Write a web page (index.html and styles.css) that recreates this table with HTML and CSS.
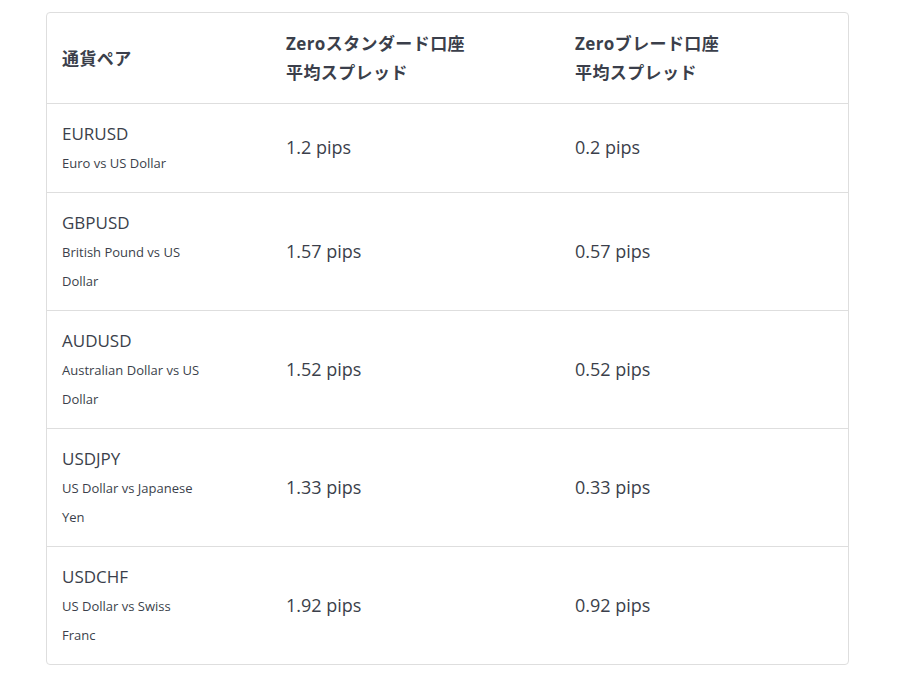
FILE: index.html
```html
<!DOCTYPE html>
<html lang="ja">
<head>
<meta charset="utf-8">
<link rel="stylesheet" href="styles.css">
</head>
<body>
<div class="wrap">
<table class="spread">
  <colgroup>
    <col class="c1">
    <col class="c2">
    <col class="c3">
  </colgroup>
  <thead>
    <tr>
      <th>通貨ペア</th>
      <th>Zeroスタンダード口座<br>平均スプレッド</th>
      <th>Zeroブレード口座<br>平均スプレッド</th>
    </tr>
  </thead>
  <tbody>
    <tr>
      <td><div class="pair">EURUSD</div><div class="desc">Euro vs US Dollar</div></td>
      <td class="val">1.2 pips</td>
      <td class="val">0.2 pips</td>
    </tr>
    <tr>
      <td><div class="pair">GBPUSD</div><div class="desc">British Pound vs US<br>Dollar</div></td>
      <td class="val">1.57 pips</td>
      <td class="val">0.57 pips</td>
    </tr>
    <tr>
      <td><div class="pair">AUDUSD</div><div class="desc">Australian Dollar vs US<br>Dollar</div></td>
      <td class="val">1.52 pips</td>
      <td class="val">0.52 pips</td>
    </tr>
    <tr>
      <td><div class="pair">USDJPY</div><div class="desc">US Dollar vs Japanese<br>Yen</div></td>
      <td class="val">1.33 pips</td>
      <td class="val">0.33 pips</td>
    </tr>
    <tr>
      <td><div class="pair">USDCHF</div><div class="desc">US Dollar vs Swiss<br>Franc</div></td>
      <td class="val">1.92 pips</td>
      <td class="val">0.92 pips</td>
    </tr>
  </tbody>
</table>
</div>
</body>
</html>
```

FILE: styles.css
```css
html, body {
  margin: 0;
  padding: 0;
  background: #ffffff;
}
body {
  font-family: "Open Sans", "Noto Sans CJK JP", sans-serif;
  color: #3b3f4b;
}
.wrap {
  margin: 12px 0 0 46px;
  width: 803px;
  border: 1px solid #dedede;
  border-radius: 4px;
  box-sizing: border-box;
  overflow: hidden;
}
.spread {
  width: 100%;
  border-collapse: collapse;
  table-layout: fixed;
}
.c1 { width: 224px; }
.c2 { width: 289px; }
th {
  text-align: left;
  font-weight: 700;
  font-size: 17px;
  line-height: 29px;
  letter-spacing: 0.4px;
  padding: 16px 16px 16px 15px;
  vertical-align: middle;
}
td {
  padding: 15px 16px 14px 15px;
  vertical-align: middle;
  border-top: 1px solid #dedede;
}
.pair {
  font-size: 17px;
  line-height: 30px;
}
.desc {
  font-size: 13px;
  line-height: 29px;
}
.val {
  font-size: 18px;
  line-height: 24px;
  padding-bottom: 17px;
}
```
